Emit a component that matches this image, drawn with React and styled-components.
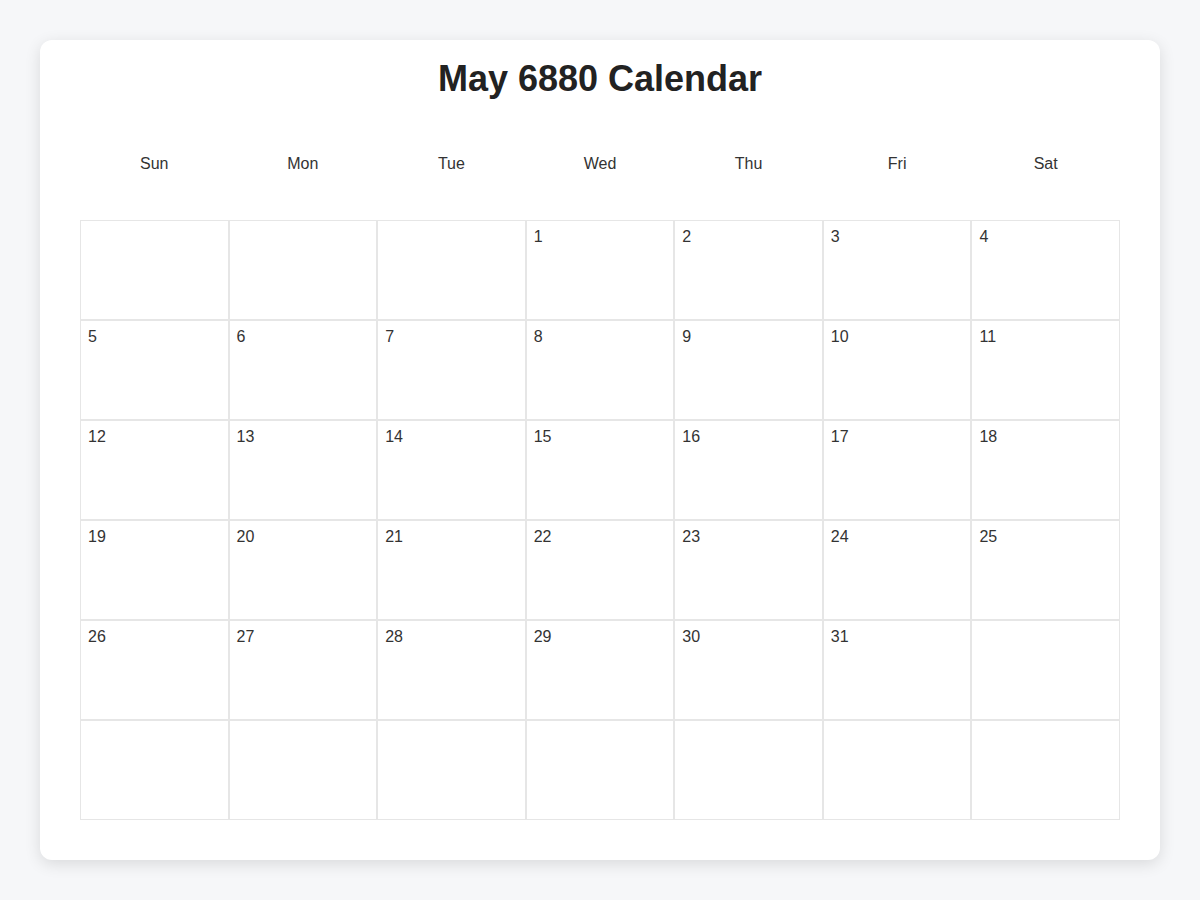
import React from 'react';
import styled, { createGlobalStyle } from 'styled-components';

const GlobalStyle = createGlobalStyle`
  html, body {
    margin: 0;
    padding: 0;
    background: #f6f7f9;
    font-family: "Liberation Sans", Arial, Helvetica, sans-serif;
    color: #333;
  }
`;

const Page = styled.div`
  padding: 40px;
`;

const Card = styled.div`
  background: #fff;
  border-radius: 12px;
  box-shadow: 0 4px 16px rgba(0, 0, 0, 0.12);
  padding: 18px 40px 40px;
`;

const Title = styled.h1`
  margin: 0 0 31px;
  text-align: center;
  font-size: 36px;
  font-weight: 700;
  color: #222;
`;

const WeekRow = styled.div`
  display: grid;
  grid-template-columns: repeat(7, 1fr);
  margin-bottom: 32px;
`;

const DayName = styled.div`
  text-align: center;
  font-size: 16px;
  color: #333;
  padding: 24px 0 15px;
`;

const Grid = styled.div`
  display: grid;
  grid-template-columns: repeat(7, 1fr);
  grid-auto-rows: 100px;
`;

const Cell = styled.div`
  border: 1px solid #e6e6e6;
  padding: 7px;
  font-size: 16px;
  color: #333;
  box-sizing: border-box;
`;

const days = ['Sun', 'Mon', 'Tue', 'Wed', 'Thu', 'Fri', 'Sat'];

const firstDay = 3;
const daysInMonth = 31;

const cells = Array.from({ length: 42 }, (_, i) => {
  const d = i - firstDay + 1;
  return d >= 1 && d <= daysInMonth ? d : null;
});

const App = () => (
  <Page>
    <GlobalStyle />
    <Card>
      <Title>May 6880 Calendar</Title>
      <WeekRow>
        {days.map(d => (
          <DayName key={d}>{d}</DayName>
        ))}
      </WeekRow>
      <Grid>
        {cells.map((d, i) => (
          <Cell key={i}>{d}</Cell>
        ))}
      </Grid>
    </Card>
  </Page>
);

export default App;
